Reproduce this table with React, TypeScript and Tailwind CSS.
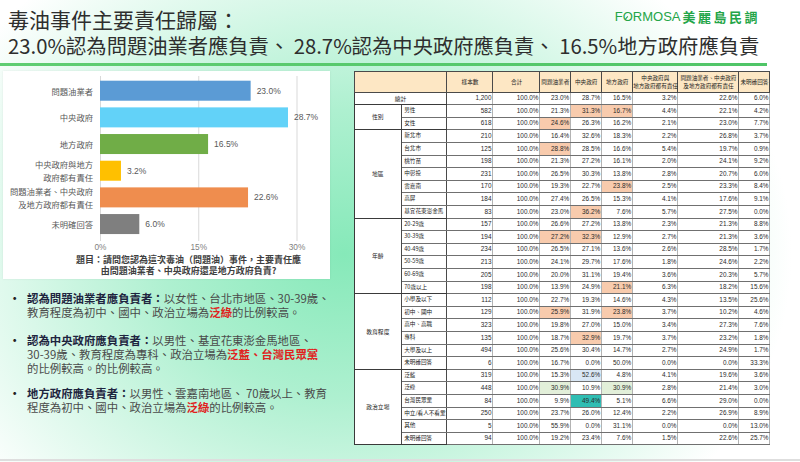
import React from 'react';

type Row = { l: string; v: string[]; h?: Record<number, string> };
type Group = { g: string; rows: Row[] };

const HL: Record<string, string> = {
  p: 'bg-[#f8cbad]',
  b: 'bg-[#d9e7f5]',
  g: 'bg-[#e2efd9]',
  t: 'bg-[#2fbdb3]',
};

const groups: Group[] = [
  {
    g: '性別',
    rows: [
      { l: '男性', v: ['582', '100.0%', '21.3%', '31.3%', '16.7%', '4.4%', '22.1%', '4.2%'], h: { 3: 'p', 4: 'p' } },
      { l: '女性', v: ['618', '100.0%', '24.6%', '26.3%', '16.2%', '2.1%', '23.0%', '7.7%'], h: { 2: 'p' } },
    ],
  },
  {
    g: '地區',
    rows: [
      { l: '新北市', v: ['210', '100.0%', '16.4%', '32.6%', '18.3%', '2.2%', '26.8%', '3.7%'] },
      { l: '台北市', v: ['125', '100.0%', '28.8%', '28.5%', '16.6%', '5.4%', '19.7%', '0.9%'], h: { 2: 'p' } },
      { l: '桃竹苗', v: ['198', '100.0%', '21.3%', '27.2%', '16.1%', '2.0%', '24.1%', '9.2%'] },
      { l: '中彰投', v: ['231', '100.0%', '26.5%', '30.3%', '13.8%', '2.8%', '20.7%', '6.0%'] },
      { l: '雲嘉南', v: ['170', '100.0%', '19.3%', '22.7%', '23.8%', '2.5%', '23.3%', '8.4%'], h: { 4: 'p' } },
      { l: '高屏', v: ['184', '100.0%', '27.4%', '26.5%', '15.3%', '4.1%', '17.6%', '9.1%'] },
      { l: '基宜花東澎金馬', v: ['83', '100.0%', '23.0%', '36.2%', '7.6%', '5.7%', '27.5%', '0.0%'], h: { 3: 'p' } },
    ],
  },
  {
    g: '年齡',
    rows: [
      { l: '20-29歲', v: ['157', '100.0%', '26.6%', '27.2%', '13.8%', '2.3%', '21.3%', '8.8%'] },
      { l: '30-39歲', v: ['194', '100.0%', '27.2%', '32.3%', '12.9%', '2.7%', '21.3%', '3.6%'], h: { 2: 'p', 3: 'p' } },
      { l: '40-49歲', v: ['234', '100.0%', '26.5%', '27.1%', '13.6%', '2.6%', '28.5%', '1.7%'] },
      { l: '50-59歲', v: ['213', '100.0%', '24.1%', '29.7%', '17.6%', '1.8%', '24.6%', '2.2%'] },
      { l: '60-69歲', v: ['205', '100.0%', '20.0%', '31.1%', '19.4%', '3.6%', '20.3%', '5.7%'] },
      { l: '70歲以上', v: ['198', '100.0%', '13.9%', '24.9%', '21.1%', '6.3%', '18.2%', '15.6%'], h: { 4: 'p' } },
    ],
  },
  {
    g: '教育程度',
    rows: [
      { l: '小學及以下', v: ['112', '100.0%', '22.7%', '19.3%', '14.6%', '4.3%', '13.5%', '25.6%'] },
      { l: '初中、國中', v: ['129', '100.0%', '25.9%', '31.9%', '23.8%', '3.7%', '10.2%', '4.6%'], h: { 2: 'p', 4: 'p' } },
      { l: '高中、高職', v: ['323', '100.0%', '19.8%', '27.0%', '15.0%', '3.4%', '27.3%', '7.6%'] },
      { l: '專科', v: ['135', '100.0%', '18.7%', '32.9%', '19.7%', '3.7%', '23.2%', '1.8%'], h: { 3: 'p' } },
      { l: '大學及以上', v: ['494', '100.0%', '25.6%', '30.4%', '14.7%', '2.7%', '24.9%', '1.7%'] },
      { l: '未明確回答', v: ['6', '100.0%', '16.7%', '0.0%', '50.0%', '0.0%', '0.0%', '33.3%'] },
    ],
  },
  {
    g: '政治立場',
    rows: [
      { l: '泛藍', v: ['319', '100.0%', '15.3%', '52.6%', '4.8%', '4.1%', '19.6%', '3.6%'], h: { 3: 'b' } },
      { l: '泛綠', v: ['448', '100.0%', '30.9%', '10.9%', '30.9%', '2.8%', '21.4%', '3.0%'], h: { 2: 'g', 4: 'g' } },
      { l: '台灣民眾黨', v: ['84', '100.0%', '9.9%', '49.4%', '5.1%', '6.6%', '29.0%', '0.0%'], h: { 3: 't' } },
      { l: '中立/看人不看黨', v: ['250', '100.0%', '23.7%', '26.0%', '12.4%', '2.2%', '26.9%', '8.9%'] },
      { l: '其他', v: ['5', '100.0%', '55.9%', '0.0%', '31.1%', '0.0%', '0.0%', '13.0%'] },
      { l: '未明確回答', v: ['94', '100.0%', '19.2%', '23.4%', '7.6%', '1.5%', '22.6%', '25.7%'] },
    ],
  },
];

const bars = [
  { label: ['問題油業者'], v: 23.0, c: '#5b9bd5' },
  { label: ['中央政府'], v: 28.7, c: '#62d2f8' },
  { label: ['地方政府'], v: 16.5, c: '#70ad47' },
  { label: ['中央政府與地方', '政府都有責任'], v: 3.2, c: '#ffc000' },
  { label: ['問題油業者、中央政府', '及地方政府都有責任'], v: 22.6, c: '#ef8d4e' },
  { label: ['未明確回答'], v: 6.0, c: '#7f7f7f' },
];

const X0 = 97;
const K = 6.55;

function Chart() {
  return (
    <svg width={327} height={183} className="block font-['Noto_Sans_CJK_TC',sans-serif]">
      {[0, 15, 30].map((t) => (
        <line key={t} x1={X0 + t * K + 0.5} x2={X0 + t * K + 0.5} y1={5} y2={170} stroke="#d9d9d9" strokeWidth={1} />
      ))}
      {bars.map((b, i) => {
        const y = 9.7 + i * 26.67;
        const cy = y + 10;
        const w = b.v * K;
        return (
          <g key={i}>
            <rect x={X0} y={y} width={w} height={20} fill={b.c} />
            <text
              x={X0 + w + 6}
              y={cy}
              dominantBaseline="central"
              fontSize={8.5}
              fill="#595959"
              fontFamily="'Liberation Sans', sans-serif"
            >
              {b.v.toFixed(1)}%
            </text>
            {b.label.length === 1 ? (
              <text x={90} y={cy} textAnchor="end" dominantBaseline="central" fontSize={8.3} fill="#595959">
                {b.label[0]}
              </text>
            ) : (
              <>
                <text x={90} y={cy - 6.4} textAnchor="end" dominantBaseline="central" fontSize={8.3} fill="#595959">
                  {b.label[0]}
                </text>
                <text x={90} y={cy + 6.4} textAnchor="end" dominantBaseline="central" fontSize={8.3} fill="#595959">
                  {b.label[1]}
                </text>
              </>
            )}
          </g>
        );
      })}
      {[0, 15, 30].map((t) => (
        <text
          key={t}
          x={X0 + t * K + 0.5}
          y={175.7}
          textAnchor="middle"
          dominantBaseline="central"
          fontSize={8.3}
          fill="#7f7f7f"
          fontFamily="'Liberation Sans', sans-serif"
        >
          {t}%
        </text>
      ))}
    </svg>
  );
}

const numCls =
  "border-r border-r-[#b3b3b3] border-b border-b-[#707070] text-right pr-[1px] text-[6.4px] leading-none font-['Liberation_Sans_Narrow','Liberation_Sans',sans-serif] text-[#2a2a2a]";

function DataTable() {
  return (
    <table className="border-collapse table-fixed w-[416px] self-start bg-white border border-[#3a3a3a] text-[#222]">
      <colgroup>
        <col className="w-[47.7px]" />
        <col className="w-[45.3px]" />
        <col className="w-[46px]" />
        <col className="w-[47px]" />
        <col className="w-[30.7px]" />
        <col className="w-[31px]" />
        <col className="w-[31px]" />
        <col className="w-[45.3px]" />
        <col className="w-[61px]" />
        <col className="w-[31px]" />
      </colgroup>
      <thead>
        <tr className="h-[20.7px] bg-[#fde7c4] text-[5.6px] leading-[8px] font-normal">
          <th colSpan={2} className="border border-[#4a4a4a] font-normal"></th>
          <th className="border border-[#4a4a4a] font-normal">樣本數</th>
          <th className="border border-[#4a4a4a] font-normal">合計</th>
          <th className="border border-[#4a4a4a] font-normal whitespace-nowrap">問題油業者</th>
          <th className="border border-[#4a4a4a] font-normal">中央政府</th>
          <th className="border border-[#4a4a4a] font-normal">地方政府</th>
          <th className="border border-[#4a4a4a] font-normal whitespace-nowrap">
            中央政府與
            <br />
            地方政府都有責任
          </th>
          <th className="border border-[#4a4a4a] font-normal whitespace-nowrap">
            問題油業者、中央政府
            <br />
            及地方政府都有責任
          </th>
          <th className="border border-[#4a4a4a] font-normal whitespace-nowrap">未明確回答</th>
        </tr>
      </thead>
      <tbody>
        <tr className="h-[12.6px]">
          <td colSpan={2} className="border-r border-r-[#4a4a4a] border-b border-b-[#3a3a3a] text-center text-[5.8px] leading-none">
            總計
          </td>
          {['1,200', '100.0%', '23.0%', '28.7%', '16.5%', '3.2%', '22.6%', '6.0%'].map((v, i) => (
            <td key={i} className={`${numCls} ${i < 2 ? 'border-r-[#4a4a4a]' : ''} border-b-[#3a3a3a]`}>
              {v}
            </td>
          ))}
        </tr>
        {groups.map((grp) =>
          grp.rows.map((r, ri) => {
            const last = ri === grp.rows.length - 1;
            return (
              <tr key={grp.g + r.l} className="h-[12.6px]">
                {ri === 0 && (
                  <td
                    rowSpan={grp.rows.length}
                    className="border-r border-r-[#4a4a4a] border-b border-b-[#3a3a3a] text-center text-[5.8px] leading-none"
                  >
                    {grp.g}
                  </td>
                )}
                <td
                  className={`border-r border-r-[#4a4a4a] border-b ${
                    last ? 'border-b-[#3a3a3a]' : 'border-b-[#707070]'
                  } pl-[2px] text-[5.6px] leading-none whitespace-nowrap`}
                >
                  {r.l}
                </td>
                {r.v.map((v, i) => {
                  const h = r.h && r.h[i] ? HL[r.h[i]] : '';
                  return (
                    <td
                      key={i}
                      className={`${numCls} ${i < 2 ? 'border-r-[#4a4a4a]' : ''} ${last ? 'border-b-[#3a3a3a]' : ''} ${h}`}
                    >
                      {v}
                    </td>
                  );
                })}
              </tr>
            );
          })
        )}
      </tbody>
    </table>
  );
}

function Bullet({ children, className = '' }: { children: React.ReactNode; className?: string }) {
  return (
    <div className={`flex ${className}`}>
      <span className="shrink-0 w-[24px] pl-[6px] font-bold text-[#222]">•</span>
      <div className="shrink-0">{children}</div>
    </div>
  );
}

export default function App() {
  return (
    <div className="relative w-[800px] h-[462px] overflow-hidden flex flex-col bg-[radial-gradient(ellipse_56%_78%_at_43%_55%,#86e9b9_0%,#aef0d0_40%,#ffffff_100%)] font-['Noto_Sans_CJK_TC',sans-serif]">
      <div className="flex flex-col pl-[8px] pt-[6px] leading-[26px] text-[#2e2e2e] whitespace-nowrap">
        <div className="flex justify-between items-center w-[752px]">
          <span className="text-[21px]">毒油事件主要責任歸屬：</span>
          <div className="flex items-center gap-[2px] text-[#24a548] mb-[4px]">
            <span className="text-[13px] leading-[14px] font-['Liberation_Sans',sans-serif]">
              F
              <span className="relative inline-block">
                O
                <span className="absolute left-[3.5px] top-[6px] w-[1.4px] h-[4px] bg-[#24a548] rotate-[40deg]"></span>
              </span>
              RMOSA
            </span>
            <span className="text-[13px] leading-[14px] font-bold tracking-[2.5px]">美麗島民調</span>
          </div>
        </div>
        <div className="text-[20.3px]">23.0%認為問題油業者應負責、 28.7%認為中央政府應負責、 16.5%地方政府應負責</div>
      </div>
      <div className="mt-[5px] h-[3px] w-[767px] bg-[linear-gradient(to_right,#5fcd72,#4fc567)]"></div>
      <div className="flex mt-[5px] pl-[3px]">
        <div className="w-[327px] shrink-0 flex flex-col">
          <div className="h-[208px] bg-white flex flex-col shadow-[0_0_2px_rgba(0,0,0,0.08)]">
            <Chart />
            <div className="ml-[72px] w-[227px] text-center text-[9px] leading-[11px] font-bold text-[#404040] whitespace-nowrap">
              題目：請問您認為這次毒油（問題油）事件，主要責任應
              <br />
              由問題油業者、中央政府還是地方政府負責?
            </div>
          </div>
          <div className="mt-[12px] flex flex-col text-[11.4px] leading-[14px] text-[#4a4a4a] whitespace-nowrap">
            <Bullet>
              <b className="text-[#1e2540]">認為問題油業者應負責者：</b>以女性、台北市地區、30-39歲、
              <br />
              教育程度為初中、國中、政治立場為<b className="text-[#e0211c]">泛綠</b>的比例較高。
            </Bullet>
            <Bullet className="mt-[14px]">
              <b className="text-[#1e2540]">認為中央政府應負責者：</b>以男性、基宜花東澎金馬地區、
              <br />
              30-39歲、教育程度為專科、政治立場為<b className="text-[#e0211c]">泛藍、台灣民眾黨</b>
              <br />
              的比例較高。的比例較高。
            </Bullet>
            <Bullet className="mt-[11px]">
              <b className="text-[#1e2540]">地方政府應負責者：</b>以男性、雲嘉南地區、 70歲以上、教育
              <br />
              程度為初中、國中、政治立場為<b className="text-[#e0211c]">泛綠</b>的比例較高。
            </Bullet>
          </div>
        </div>
        <div className="ml-[23.5px] shrink-0">
          <DataTable />
        </div>
      </div>
      <div className="mt-auto mb-[1px] h-[2px] bg-[#dedede]"></div>
    </div>
  );
}
